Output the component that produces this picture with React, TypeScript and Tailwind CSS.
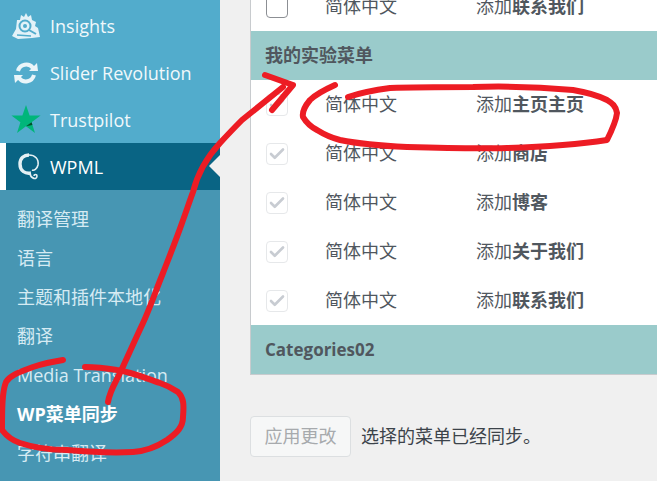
import { Check } from 'lucide-react'

const font = { fontFamily: '"Open Sans", "Noto Sans CJK SC", sans-serif' }

function InsightsIcon() {
  return (
    <svg width="28" height="28" viewBox="0 0 28 28" fill="none">
      <path
        d="M0 24 L4 17 L5 8 L8 8 L9 3 L12 5 L14 1 L16 5 L19 3 L20 8 L24 10 L23 14 L26 16 L28 25 L20 26 L6 27 Z"
        fill="#e3f2f8"
      />
      <circle cx="13" cy="14" r="5.5" fill="none" stroke="#52accc" strokeWidth="2" />
      <circle cx="13" cy="14" r="2" fill="#52accc" />
      <path d="M17 18 L24 22" stroke="#52accc" strokeWidth="2" />
      <path d="M5 23 L19 24" stroke="#52accc" strokeWidth="1.5" />
    </svg>
  )
}

function SliderIcon() {
  return (
    <svg width="26" height="24" viewBox="0 0 26 24" fill="none">
      <path d="M5 10 A8.5 8.5 0 0 1 20 7" stroke="#eaf5f9" strokeWidth="4" />
      <path d="M16 10 L25 10 L24 2 Z" fill="#eaf5f9" />
      <path d="M21 14 A8.5 8.5 0 0 1 6 17" stroke="#eaf5f9" strokeWidth="4" />
      <path d="M10 14 L1 14 L2 22 Z" fill="#eaf5f9" />
    </svg>
  )
}

function TrustpilotIcon() {
  return (
    <svg width="30" height="29" viewBox="0 0 30 29">
      <path d="M15 0 L18.6 10.6 L29.6 10.6 L20.6 17.2 L24 28 L15 21.3 L6 28 L9.4 17.2 L0.4 10.6 L11.4 10.6 Z" fill="#00b67a" />
      <path d="M20.6 17.2 L21.4 20 L15 21.3 Z" fill="#005128" />
    </svg>
  )
}

function WpmlIcon() {
  return (
    <svg width="22" height="28" viewBox="0 0 22 28" fill="none">
      <path d="M13 20 C7 21 2 18 2 11 C2 5 6 2 11 2" stroke="#e4f0f4" strokeWidth="3.4" />
      <path d="M11 2 C17 2 21 6 20 12 C19 16 16 18 14 17" stroke="#e4f0f4" strokeWidth="1.6" />
      <path d="M12 21 C13 26 19 27 19 23 C19 21 16 21 16 23" stroke="#e4f0f4" strokeWidth="1.6" />
    </svg>
  )
}

const subItems = ['翻译管理', '语言', '主题和插件本地化', '翻译', 'Media Translation']

function MenuRow({ icon, label }: { icon: React.ReactNode; label: string }) {
  return (
    <div className="flex h-[47px] items-center text-[18px] text-[#f0f8fb]">
      <div className="flex w-[50px] shrink-0 justify-center pl-[1px]">{icon}</div>
      <span className="pt-[2px]">{label}</span>
    </div>
  )
}

function SyncRow({ bold, checked = true }: { bold: string; checked?: boolean }) {
  return (
    <div className="flex h-[49px] shrink-0 items-center bg-white pl-[15px] text-[18px] text-[#50575e]">
      <div
        className={
          checked
            ? 'flex h-[22px] w-[22px] shrink-0 items-center justify-center rounded-[4px] border border-[#e6e8ea] bg-white'
            : 'h-[22px] w-[22px] shrink-0 rounded-[4px] border border-[#8c8f94] bg-white'
        }
      >
        {checked && <Check size={18} strokeWidth={3.5} className="text-[#c8ccd2]" />}
      </div>
      <span className="ml-[37px] w-[151px] shrink-0">简体中文</span>
      <span>
        添加<b className="font-bold">{bold}</b>
      </span>
    </div>
  )
}

function GroupRow({ label, latin }: { label: string; latin?: boolean }) {
  return (
    <div
      className={
        latin
          ? 'flex h-[49px] shrink-0 items-center bg-[#9acbcb] pl-[14px] text-[17px] font-bold text-[#50575e]'
          : 'flex h-[49px] shrink-0 items-center bg-[#9acbcb] pl-[14px] text-[18px] font-bold text-[#50575e]'
      }
    >
      {label}
    </div>
  )
}

export default function App() {
  return (
    <div className="relative flex h-[481px] w-[657px] overflow-hidden bg-[#f0f0f0]" style={font}>
      <aside className="flex w-[220px] shrink-0 flex-col bg-[#52accc] pt-[2px]">
        <MenuRow icon={<InsightsIcon />} label="Insights" />
        <MenuRow icon={<SliderIcon />} label="Slider Revolution" />
        <MenuRow icon={<TrustpilotIcon />} label="Trustpilot" />
        <div className="relative flex h-[47px] items-center border-l-[6px] border-white bg-[#096484] text-[18px] text-white">
          <div className="flex w-[44px] shrink-0 justify-center pl-[2px]">
            <WpmlIcon />
          </div>
          <span className="pt-[2px]">WPML</span>
          <div className="absolute right-0 top-[12px] h-0 w-0 border-y-[11px] border-r-[11px] border-y-transparent border-r-[#f0f0f0]" />
        </div>
        <div className="flex flex-1 flex-col bg-[#4796b3] pl-[17px] pt-[10px] text-[18px] text-[#d6ebf3]">
          {subItems.map((item) => (
            <div key={item} className="flex h-[39px] shrink-0 items-center">
              {item}
            </div>
          ))}
          <div className="flex h-[39px] shrink-0 items-center font-bold text-white">WP菜单同步</div>
          <div className="flex h-[39px] shrink-0 items-center">字符串翻译</div>
        </div>
      </aside>

      <main className="flex-1 pl-[30px]">
        <div className="-mt-[18px] flex flex-col border-b border-l border-[#c8cbce]">
          <SyncRow bold="联系我们" checked={false} />
          <GroupRow label="我的实验菜单" />
          <SyncRow bold="主页主页" />
          <SyncRow bold="商店" />
          <SyncRow bold="博客" />
          <SyncRow bold="关于我们" />
          <SyncRow bold="联系我们" />
          <GroupRow label="Categories02" latin />
        </div>
        <div className="mt-[41px] flex items-center">
          <div className="flex h-[41px] w-[101px] items-center justify-center rounded-[4px] border border-[#dcdfe1] bg-[#f6f7f7] text-[18px] text-[#a7aaad]">
            应用更改
          </div>
          <span className="ml-[10px] text-[18px] text-[#3c434a]">选择的菜单已经同步。</span>
        </div>
      </main>

      <svg className="pointer-events-none absolute left-0 top-0" width="657" height="481" fill="none" stroke="#ed1c24" strokeWidth="6" strokeLinecap="round" strokeLinejoin="round">
        <path d="M108 402 C110 390 116 382 120 373 C127 358 135 340 143 323 C150 308 156 290 163 273 C170 255 176 240 182 223 C186 212 190 200 193 192 C198 172 208 156 220 143 C232 130 236 126 242 120 L283 87" />
        <path d="M265 75 L293 85 L272 110" />
        <path d="M63 360 C50 362 42 364 33 367 C20 372 10 375 6 382 C2 392 2 410 2 430 C8 438 14 441 20 443 C35 448 50 450 67 450 C90 452 115 453 133 452 C148 451 158 446 167 440 C177 433 183 427 183 417 C184 405 184 398 178 392 C172 388 166 385 160 383 C145 378 132 372 117 370 C105 368 95 367 85 367" />
        <path d="M335 85 C324 90 316 94 310 100 C305 106 302 112 303 117 C306 122 311 127 317 130 C325 135 332 138 340 140 C360 144 385 146 407 147 C440 148 475 149 507 148 C540 147 575 145 607 140 C612 130 616 122 617 113 C616 106 612 103 607 100 C597 95 585 92 573 90 C540 87 505 86 473 87 C445 87 415 87 390 88 C375 90 360 93 348 97" />
      </svg>
    </div>
  )
}
